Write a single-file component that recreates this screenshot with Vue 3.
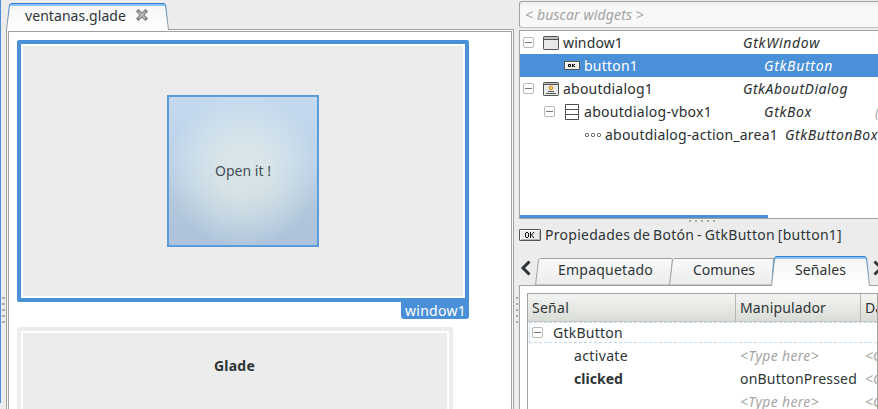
<script setup>
const tree = [
  { depth: 0, open: true, icon: 'window', name: 'window1', nw: 60, type: 'GtkWindow', tw: 77 },
  { depth: 1, open: false, icon: 'button', name: 'button1', nw: 54, type: 'GtkButton', tw: 69, selected: true },
  { depth: 0, open: true, icon: 'about', name: 'aboutdialog1', nw: 90, type: 'GtkAboutDialog', tw: 105 },
  { depth: 1, open: true, icon: 'box', name: 'aboutdialog-vbox1', nw: 128, type: 'GtkBox', tw: 48, extra: '(' },
  { depth: 2, open: false, icon: 'dots', name: 'aboutdialog-action_area1', nw: 173, type: 'GtkButtonBox', tw: 93 }
]

const signals = [
  { name: 'activate', nw: 54, handler: '<Type here>', hw: 79, hint: true },
  { name: 'clicked', nw: 49, handler: 'onButtonPressed', hw: 117, bold: true },
  { name: '', nw: 0, handler: '<Type here>', hw: 79, hint: true }
]

// Tracks a label so that it occupies the given width.
const vFit = {
  mounted(el, { value }) {
    const n = el.textContent.length
    if (!value || !n) return
    const natural = el.getBoundingClientRect().width
    el.style.letterSpacing = `${(value - natural) / n}px`
  }
}
</script>

<template>
  <div class="app">
    <div class="edge">
      <div class="edge-line"></div>
      <div class="grip grip-v"><i v-for="n in 5" :key="n"></i></div>
    </div>

    <section class="editor">
      <div class="doc-tab">
        <svg class="tab-shape" width="164" height="29" viewBox="0 0 164 29">
          <defs>
            <linearGradient id="act" x1="0" y1="0" x2="0" y2="1">
              <stop offset="0" stop-color="#f5f5f5" /><stop offset="1" stop-color="#ffffff" />
            </linearGradient>
            <linearGradient id="side" x1="0" y1="0" x2="0" y2="1">
              <stop offset="0" stop-color="#3584d6" /><stop offset="1" stop-color="#a2a39f" />
            </linearGradient>
          </defs>
          <path d="M.5 30L3.500 5Q4 3.500 5.500 3.500H157Q159 3.500 159.500 5L162.500 30Z" fill="url(#act)" />
          <path d="M4 5H159" stroke="#8fc0f5" stroke-width="2" />
          <path d="M.5 30L3.500 5Q4 3.500 5.500 3.500H157Q159 3.500 159.500 5L162.500 30" fill="none" stroke="url(#side)" />
          <path d="M5 3.500H158" stroke="#2f7fd3" />
        </svg>
        <span v-fit="101" class="doc-name">ventanas.glade</span>
        <svg class="close" width="12" height="12" viewBox="0 0 12 12">
          <path d="M2.500 2.500L9.500 9.500M9.500 2.500L2.500 9.500" stroke="#777873" stroke-width="3.600" stroke-linecap="square" />
          <path d="M2.500 2.500L9.500 9.500M9.500 2.500L2.500 9.500" stroke="#c2c3c0" stroke-width="1.500" />
        </svg>
      </div>
      <div class="canvas-outer">
        <div class="canvas">
          <div class="frame selected">
            <div class="frame-body">
              <div class="design-button"><span v-fit="56">Open it !</span></div>
            </div>
            <div class="frame-tag"><span v-fit="61">window1</span></div>
          </div>
          <div class="frame second">
            <div class="frame-body"><b v-fit="41">Glade</b></div>
          </div>
        </div>
      </div>
    </section>

    <div class="splitter"><div class="grip grip-v"><i v-for="n in 5" :key="n"></i></div></div>

    <section class="inspector">
      <div class="search"><em v-fit="119">&lt; buscar widgets &gt;</em></div>
      <div class="tree">
        <div v-for="row in tree" :key="row.name" class="tree-row" :class="['d' + row.depth, { sel: row.selected }]">
          <span class="slot"><span v-if="row.open" class="expander"></span></span>
          <span class="icon">
            <svg v-if="row.icon === 'window'" width="16" height="14" viewBox="0 0 16 14">
              <rect x=".5" y=".5" width="15" height="13" rx=".7" fill="#e9e9e9" stroke="#50534f" />
              <path d="M1 2H15" stroke="#c1c1c1" stroke-width="2" /><path d="M1 3.500H15" stroke="#50534f" />
            </svg>
            <svg v-else-if="row.icon === 'button'" width="16" height="9" viewBox="0 0 16 9">
              <rect x=".5" y=".5" width="15" height="8" fill="#eeeeec" stroke="#555753" />
              <path d="M1.500 7.500V1.500H14" fill="none" stroke="#fff" />
              <path d="M4.500 3.500H6.500V5.500H4.500ZM8.500 3V6M11 3L9 4.500L11 6" fill="none" stroke="#000" />
            </svg>
            <svg v-else-if="row.icon === 'about'" width="16" height="14" viewBox="0 0 16 14">
              <rect x=".5" y=".5" width="15" height="13" rx=".7" fill="#e9e9e9" stroke="#50534f" />
              <path d="M1 1.500H15" stroke="#c1c1c1" /><path d="M1 2.500H15" stroke="#50534f" />
              <rect x="6.500" y="4.500" width="3" height="3" rx=".8" fill="#fce94f" stroke="#ce6a00" />
              <path d="M5 9.500H11M3 11.500H13" stroke="#555753" />
            </svg>
            <svg v-else-if="row.icon === 'box'" width="16" height="16" viewBox="0 0 16 16">
              <path d="M1.500 .5H14.500V15.500H1.500ZM1.500 5.500H14.500M1.500 10.500H14.500" fill="#fff" stroke="#4c4f4b" />
            </svg>
            <svg v-else width="16" height="4" viewBox="0 0 16 4">
              <g fill="#fff" stroke="#444642"><rect x=".5" y=".5" width="3" height="3" rx="1" /><rect x="6.500" y=".5" width="3" height="3" rx="1" /><rect x="12.500" y=".5" width="3" height="3" rx="1" /></g>
            </svg>
          </span>
          <span class="name"><span v-fit="row.nw">{{ row.name }}</span></span>
          <em v-fit="row.tw">{{ row.type }}</em>
          <em v-if="row.extra" class="extra">{{ row.extra }}</em>
        </div>
        <div class="hscroll"></div>
      </div>

      <div class="grip grip-h"><i v-for="n in 5" :key="n"></i></div>

      <div class="title">
        <svg width="22" height="12" viewBox="0 0 22 12">
          <rect x=".5" y=".5" width="21" height="11" rx=".5" fill="#ececea" stroke="#555753" />
          <path d="M1.500 10.500V1.500H20" fill="none" stroke="#fff" /><path d="M2 10.500H20.500V2" fill="none" stroke="#b5b6b3" />
          <path d="M7 3.500H9M7 8.500H9M6.500 4V8M9.500 4V8M11.500 3V9M15 3L12.500 6L15 9" fill="none" stroke="#111" />
        </svg>
        <span v-fit="297">Propiedades de Botón - GtkButton [button1]</span>
      </div>

      <div class="tabs">
        <svg class="arrow" width="11" height="16" viewBox="0 0 11 16"><path d="M9.500 1.500L3 8L9.500 14.500" fill="none" stroke="#2e3436" stroke-width="3" /></svg>
        <svg class="tabs-shape" width="343" height="31" viewBox="0 0 343 31">
          <defs>
            <linearGradient id="idle" x1="0" y1="0" x2="0" y2="1">
              <stop offset="0" stop-color="#fafafa" /><stop offset="1" stop-color="#ececeb" />
            </linearGradient>
          </defs>
          <path d="M.5 30L3.500 5Q4 3.500 5.500 3.500H136.500L137.500 5L135 30Z" fill="url(#idle)" stroke="#a2a39f" />
          <path d="M134.500 30L137.500 5Q138 3.500 139.500 3.500H238.500L237 30Z" fill="url(#idle)" stroke="#a2a39f" />
          <path d="M236.500 31L239.500 3Q240 1.500 241.500 1.500H329Q331 1.500 331.500 3L334.500 31Z" fill="url(#act)" />
          <path d="M240 3H331" stroke="#8fc0f5" stroke-width="2" />
          <path d="M236.500 31L239.500 3Q240 1.500 241.500 1.500H329Q331 1.500 331.500 3L334.500 31" fill="none" stroke="url(#side)" />
          <path d="M241 1.500H330" stroke="#2f7fd3" />
        </svg>
        <span class="tab t1"><span v-fit="95">Empaquetado</span></span>
        <span class="tab t2"><span v-fit="62">Comunes</span></span>
        <span class="tab t3"><span v-fit="51">Señales</span></span>
        <svg class="arrow right" width="11" height="16" viewBox="0 0 11 16"><path d="M1.500 1.500L8 8L1.500 14.500" fill="none" stroke="#2e3436" stroke-width="3" /></svg>
      </div>

      <div class="page">
        <div class="table">
          <div class="thead">
            <div class="c1"><span v-fit="37">Señal</span></div>
            <div class="c2"><span v-fit="86">Manipulador</span></div>
            <div class="c3">Da</div>
          </div>
          <div class="group"><span class="expander"></span><span v-fit="70">GtkButton</span></div>
          <div v-for="(s, i) in signals" :key="i" class="signal">
            <div class="s1" :class="{ bold: s.bold }"><span v-fit="s.nw">{{ s.name }}</span></div>
            <div class="s2" :class="{ hint: s.hint }"><span v-fit="s.hw">{{ s.handler }}</span></div>
            <div class="s3 hint">&lt;C</div>
          </div>
        </div>
      </div>
    </section>
  </div>
</template>

<style>
body { overflow: hidden; }
</style>

<style scoped>
* { box-sizing: border-box; }
.app { display: flex; width: 878px; height: 409px; overflow: hidden; background: #ececec; color: #2e3436; font: 14px/22px "Noto Sans", "Open Sans", sans-serif; white-space: pre; }
svg { display: block; flex: none; }
.edge { width: 6px; display: flex; flex: none; }
.edge-line { width: 1px; height: 403px; background: #4a90d9; }
.grip { display: flex; gap: 4px; }
.grip i { width: 2px; height: 2px; background: #a8a9a5; }
.grip-v { flex-direction: column; margin: 297px 0 0 1px; }
.edge .grip i { width: 3px; }

.editor { width: 508px; flex: none; display: flex; flex-direction: column; }
.doc-tab { position: relative; z-index: 1; height: 29px; flex: none; display: flex; align-items: center; padding: 5px 0 0 19px; }
.doc-tab .tab-shape { position: absolute; left: 0; top: 0; overflow: visible; }
.doc-name, .close { position: relative; }
.doc-name { top: -1px; }
.close { margin-left: 10px; top: -2px; }
.canvas-outer { flex: 1; border: 1px solid #a2a39f; border-bottom: 0; padding: 1px 1px 0; background: #fafafa; }
.canvas { height: 378px; border: 1px solid #a2a39f; border-bottom: 0; background: #fff; padding: 8px 0 0 8px; overflow: hidden; }
.frame { position: relative; border: 4px solid #ececec; border-radius: 2px; padding: 2px; background: #fff; }
.frame-body { background: #ececec; display: flex; justify-content: center; height: 100%; }
.frame.selected { width: 452px; height: 262px; border-color: #4a90d9; border-bottom-right-radius: 0; }
.selected .frame-body { align-items: center; }
.design-button { width: 152px; height: 152px; border: 2px solid #5e9bdd; display: flex; align-items: center; justify-content: center; color: #444d53; background: radial-gradient(circle 77px at 50% 50%, rgba(232,240,234,.68), rgba(232,240,234,.6) 35%, rgba(228,240,238,.38) 65%, rgba(225,238,238,.14) 88%, rgba(220,235,235,0)), linear-gradient(#c5d9ee, #bcd2e8 45%, #b2c7db 72%, #adc3db); }
.frame-tag { position: absolute; right: -4px; top: 257px; width: 68px; height: 18px; padding-left: 4px; line-height: 19px; color: #fff; background: #4a90d9; border-radius: 0 0 3px 3px; }
.frame.second { width: 436px; height: 150px; margin-top: 25px; }
.second b { margin: 22px 1px 0 0; }

.splitter { width: 5px; flex: none; }
.splitter .grip { margin-left: 2px; }

.inspector { width: 359px; flex: none; display: flex; flex-direction: column; }
.search { height: 27px; margin-top: 1px; flex: none; width: 370px; border: 1px solid #a2a39f; border-bottom-color: #c0c1bf; border-radius: 3px; background: linear-gradient(#eeeeec, #f8f8f8 5px, #f8f8f8); color: #a3a4a1; padding: 2px 0 0 5px; }
.tree { height: 189px; margin-top: 2px; flex: none; position: relative; border: 1px solid #a2a39f; border-right: 0; background: #fff; overflow: hidden; }
.tree-row { height: 23px; width: 380px; display: flex; align-items: center; padding-left: 3px; color: #2b2f31; }
.tree-row.d1 { padding-left: 24px; }
.tree-row.d2 { padding-left: 45px; }
.tree-row.sel { background: #4a90d9; color: #fff; }
.slot { width: 20px; flex: none; }
.expander { display: block; position: relative; flex: none; width: 11px; height: 11px; border: 1px solid #b9bab7; border-radius: 2px; background: #fff; }
.expander::after { content: ""; position: absolute; left: 1px; top: 4px; width: 7px; height: 1px; background: #777974; }
.icon { width: 20px; flex: none; }
.name { width: 180px; flex: none; }
.extra { margin-left: 63px; color: #aaa; }
.hscroll { position: absolute; left: 0; bottom: 0; width: 248px; height: 3px; background: #4a90d9; }
.grip-h { margin: 1px 0 0 170px; height: 2px; flex: none; }

.title { display: flex; align-items: center; gap: 4px; height: 22px; margin-top: 2px; flex: none; word-spacing: -1px; }
.tabs { position: relative; z-index: 1; height: 31px; margin-top: 9px; flex: none; display: flex; }
.tabs-shape { position: absolute; left: 16px; top: 0; }
.arrow { margin: 5px 0 0 1px; }
.tab { position: relative; padding-top: 4px; flex: none; }
.t1 { width: 135px; padding-left: 27px; }
.t2 { width: 102px; padding-left: 27px; }
.t3 { width: 104px; padding-left: 27px; }
.arrow.right { margin-left: 1px; }
.page { margin-top: -1px; flex: 1; background: #fff; border: 1px solid #a2a39f; border-right: 0; border-bottom: 0; padding: 7px 0 0 7px; overflow: hidden; }
.table { height: 130px; border: 1px solid #a2a39f; overflow: hidden; }
.thead { display: flex; width: 370px; height: 28px; background: linear-gradient(#f4f5f3, #d9dcd6); border-bottom: 1px solid #c5c6c3; line-height: 27px; }
.thead div, .signal div { flex: none; }
.thead div { padding-left: 4px; }
.c1 { width: 207px; }
.c2 { width: 125px; }
.c2, .c3 { border-left: 1px solid #b4b6b2; }
.group { height: 21px; display: flex; align-items: center; gap: 10px; border: 1px dashed #c4dcf2; border-right: 0; padding-left: 2px; margin-left: 1px; }
.signal { display: flex; height: 23px; width: 370px; line-height: 25px; }
.s1 { width: 208px; padding-left: 46px; }
.s2 { width: 125px; padding-left: 4px; }
.s3 { padding-left: 4px; }
.hint { color: #a5a6a3; font-style: italic; }
.bold { font-weight: 700; }
</style>
